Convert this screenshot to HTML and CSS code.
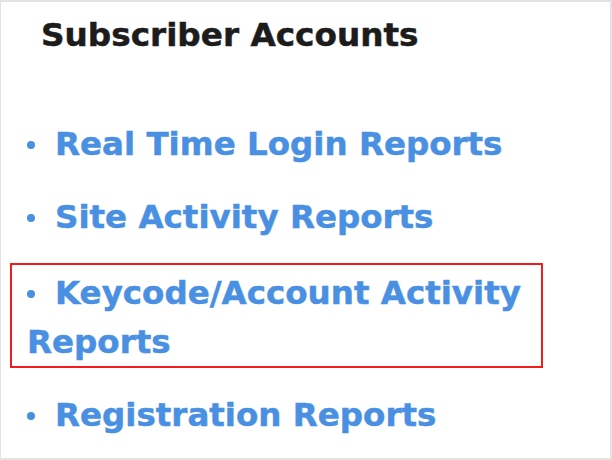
FILE: index.html
```html
<!DOCTYPE html>
<html>
<head>
<meta charset="utf-8">
<link rel="stylesheet" href="styles.css">
</head>
<body>
<div class="frame">
  <h2 class="heading">Subscriber Accounts</h2>
  <div class="list">
    <div class="item"><span class="dot"></span>Real Time Login Reports</div>
    <div class="item"><span class="dot"></span>Site Activity Reports</div>
    <div class="item item-marked"><span class="dot"></span>Keycode/Account Activity Reports</div>
    <div class="item"><span class="dot"></span>Registration Reports</div>
  </div>
</div>
</body>
</html>
```
FILE: styles.css
```css
html, body {
  margin: 0;
  padding: 0;
  background: #ffffff;
}
.frame {
  box-sizing: border-box;
  width: 612px;
  height: 460px;
  border-top: 2px solid #e3e3e3;
  border-left: 1px solid #e3e3e3;
  border-right: 2px solid #e3e3e3;
  border-bottom: 2px solid #e3e3e3;
  background: #ffffff;
  font-family: "DejaVu Sans", sans-serif;
  font-weight: bold;
  overflow: hidden;
}
.heading {
  margin: 0;
  padding: 10px 0 0 40px;
  font-size: 32.7px;
  line-height: 47px;
  color: #1c1c1c;
  -webkit-text-stroke: 0.5px #1c1c1c;
}
.list {
  display: flex;
  flex-direction: column;
  gap: 24px;
  padding: 61px 20px 0 26px;
}
.item {
  position: relative;
  font-size: 32.5px;
  line-height: 49px;
  color: #4a90e2;
  -webkit-text-stroke: 0.5px #4a90e2;
}
.dot {
  display: inline-block;
  width: 8px;
  height: 8px;
  border-radius: 50%;
  background: #4a90e2;
  margin-right: 20px;
  vertical-align: 6px;
}
.item-marked {
  margin-top: 3px;
}
.item-marked::after {
  content: "";
  position: absolute;
  box-sizing: border-box;
  left: -17px;
  top: -6px;
  width: 533px;
  height: 105px;
  border: 2px solid #f31c1c;
}
```
